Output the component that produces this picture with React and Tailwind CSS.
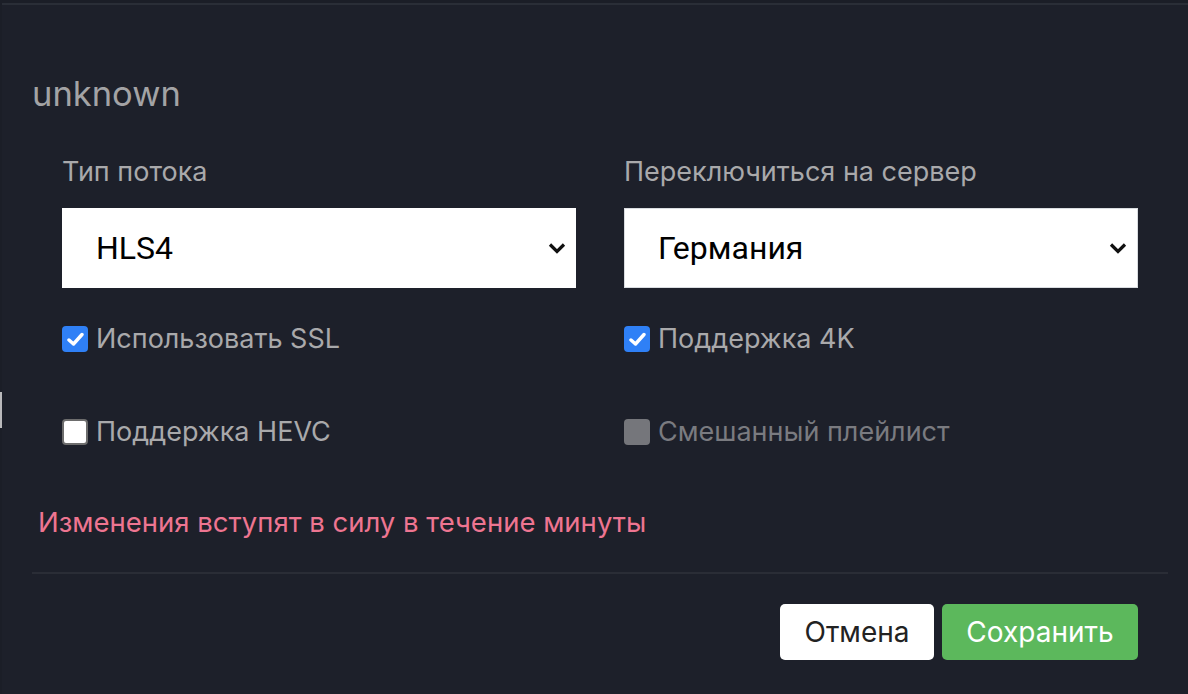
import React, { useState } from 'react';

const Chevron = () => (
  <svg width="18" height="12" viewBox="0 0 18 12" className="shrink-0">
    <polyline points="2,2.5 9,9.5 16,2.5" fill="none" stroke="#111" strokeWidth="3.2" />
  </svg>
);

const Box = ({ checked, disabled, onClick }) => {
  if (disabled) {
    return <span className="block w-[26px] h-[26px] rounded-[4px] bg-[#75767b]" />;
  }
  if (checked) {
    return (
      <span onClick={onClick} className="flex items-center justify-center w-[26px] h-[26px] rounded-[4px] bg-[#2f80f6]">
        <svg width="17" height="15" viewBox="0 0 17 15">
          <polyline points="2,8 6.5,12 15,2.5" fill="none" stroke="#fff" strokeWidth="3.4" strokeLinecap="round" strokeLinejoin="round" />
        </svg>
      </span>
    );
  }
  return <span onClick={onClick} className="block w-[26px] h-[26px] rounded-[4px] bg-white border-2 border-[#6d6d6d]" />;
};

const Check = ({ label, checked, disabled, onToggle }) => (
  <label className="flex items-center h-[40px] gap-[8px]">
    <Box checked={checked} disabled={disabled} onClick={onToggle} />
    <span className={`text-[27px] ${disabled ? 'text-[#7a7b80]' : 'text-[#a9a9ab]'}`}>{label}</span>
  </label>
);

const Select = ({ value, bordered }) => (
  <div className={`flex items-center justify-between h-[80px] bg-white pr-[10px] ${bordered ? 'pl-[33px] border border-[#d9dce0]' : 'pl-[34px]'}`}>
    <span className="text-[32px] text-black" style={{ fontFamily: 'Roboto, sans-serif' }}>{value}</span>
    <Chevron />
  </div>
);

export default function App() {
  const [ssl, setSsl] = useState(true);
  const [k4, setK4] = useState(true);
  const [hevc, setHevc] = useState(false);

  return (
    <div className="relative w-[1188px] h-[694px] overflow-hidden bg-[#1b1e27]" style={{ fontFamily: 'Inter, "Noto Sans", sans-serif' }}>
      <div className="absolute left-0 top-[392px] w-[2px] h-[36px] bg-[#b9b9bb]" />
      <div className="ml-[2px] mt-[3px] h-[691px] bg-[#1d202a] border-t-2 border-[#2a2e37]">
        <div className="pl-[30px] pt-[67px] h-[44px] box-content leading-[44px] text-[34.5px] text-[#a3a3a5]">unknown</div>

        <div className="grid grid-cols-2 gap-x-[48px] w-[1076px] ml-[60px] mt-[41px]">
          <div className="h-[30px] leading-[30px] text-[27px] text-[#a9a9ab]">Тип потока</div>
          <div className="h-[30px] leading-[30px] text-[27px] text-[#a9a9ab]">Переключиться на сервер</div>

          <div className="mt-[21px]"><Select value="HLS4" /></div>
          <div className="mt-[21px]"><Select value="Германия" bordered /></div>

          <div className="mt-[31px]"><Check label="Использовать SSL" checked={ssl} onToggle={() => setSsl(!ssl)} /></div>
          <div className="mt-[31px]"><Check label="Поддержка 4K" checked={k4} onToggle={() => setK4(!k4)} /></div>

          <div className="mt-[53px]"><Check label="Поддержка HEVC" checked={hevc} onToggle={() => setHevc(!hevc)} /></div>
          <div className="mt-[53px]"><Check label="Смешанный плейлист" disabled /></div>
        </div>

        <div className="pl-[36px] mt-[52px] h-[36px] leading-[36px] text-[27.5px] text-[#ee7591]">
          Изменения вступят в силу в течение минуты
        </div>

        <div className="ml-[30px] w-[1136px] mt-[32px] border-t-2 border-[#2a2d36]" />

        <div className="flex justify-end gap-[8px] w-[1136px] mt-[30px]">
          <button className="w-[154px] h-[56px] rounded-[5px] bg-white text-[28px] text-[#222]">Отмена</button>
          <button className="w-[196px] h-[56px] rounded-[5px] bg-[#5cb85c] text-[28px] text-white">Сохранить</button>
        </div>
      </div>
    </div>
  );
}
